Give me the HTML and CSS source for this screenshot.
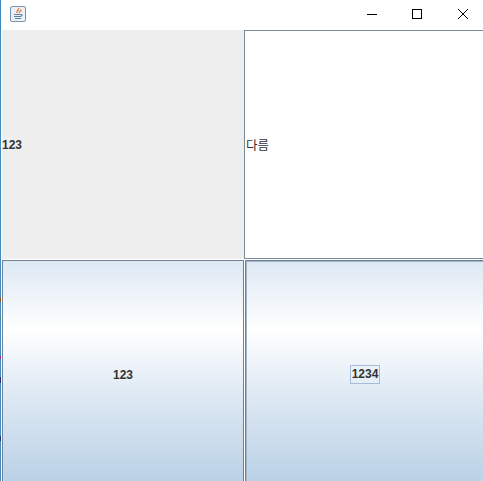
FILE: index.html
```html
<!DOCTYPE html>
<html lang="en">
<head>
    <meta charset="UTF-8">
    <meta name="viewport" content="width=device-width, initial-scale=1.0">
    <title>Swing window</title>
    <link rel="stylesheet" href="styles.css">
</head>
<body>
    <div class="window">
        <div class="titlebar">
            <svg class="app-icon" width="16" height="16" viewBox="0 0 16 16">
                <rect x="0.5" y="0.5" width="15" height="15" rx="1.5" fill="#e9f0f7" stroke="#7d93ab"/>
                <path d="M8.5 2c1.5 1.5-2.5 2.5-1.5 5M11 3.500c.5 1.500-2.500 2-1.500 3.500" fill="none" stroke="#e8742a" stroke-width="1.3"/>
                <path d="M4 8.5h6.500M4 10.5h7M5 12.5h6" stroke="#5b7f9f" stroke-width="1"/>
                <path d="M10.5 8.5h1.500v1.500h-1.500" fill="none" stroke="#5b7f9f"/>
            </svg>
            <div class="window-controls">
                <svg width="46" height="29" viewBox="0 0 46 29"><path d="M19 14.5h10" stroke="#000"/></svg>
                <svg width="46" height="29" viewBox="0 0 46 29"><rect x="18.5" y="9.5" width="9" height="9" fill="none" stroke="#000"/></svg>
                <svg width="46" height="29" viewBox="0 0 46 29"><path d="M18 9l10 10M28 9l-10 10" stroke="#000" fill="none"/></svg>
            </div>
        </div>
        <div class="content">
            <div class="label label-plain"><span class="bold">123</span></div>
            <div class="label label-field">다름</div>
            <button class="btn">123</button>
            <button class="btn btn-default"><span class="focus">1234</span></button>
        </div>
    </div>
</body>
</html>
```

FILE: styles.css
```css
html, body {
    margin: 0;
    height: 100%;
    overflow: hidden;
}
body {
    background: #ffffff;
    font-family: "Liberation Sans", Arial, sans-serif;
    font-size: 12px;
    color: #333333;
}
/* 1px strip of desktop showing along the left edge */
.window {
    height: 481px;
    padding-left: 1px;
    box-sizing: border-box;
    display: flex;
    flex-direction: column;
    background: linear-gradient(
        #3f8cc4 297px, #8a5a20 297px, #8a5a20 302px,
        #3f8cc4 302px, #3f8cc4 316px, #3f8f80 316px, #3f8f80 320px,
        #3f8cc4 320px, #3f8cc4 356px, #a0209a 356px, #a0209a 359px,
        #3f8cc4 359px, #3f8cc4 377px, #20306a 377px, #20306a 383px,
        #3f8cc4 383px, #3f8cc4 436px, #20306a 436px, #20306a 441px,
        #3f8cc4 441px
    ) left top / 1px 100% no-repeat;
    background-color: #ffffff;
}
.titlebar {
    height: 30px;
    flex: none;
    display: flex;
    justify-content: space-between;
    padding-left: 9px;
    background: #ffffff;
}
.app-icon {
    margin-top: 6px;
}
.window-controls {
    display: flex;
    margin-right: -3px;
}
/* the frame runs a little past the right and bottom of the shot */
.content {
    flex: 1;
    min-height: 0;
    display: grid;
    grid-template-columns: 242px 241px;
    grid-template-rows: 229px 229px;
    row-gap: 1px;
    padding-left: 1px;
    background: #ffffff;
}
.label {
    display: flex;
    align-items: center;
}
.label-plain {
    background: #eeeeee;
}
.bold {
    font-weight: bold;
}
.label-field {
    padding-left: 1px;
    background: #ffffff;
    border: 1px solid #7a8a99;
    font-family: "Noto Sans CJK KR", sans-serif;
    font-size: 12.5px;
}
.btn {
    margin: 0;
    padding: 0;
    border: 1px solid #6f8299;
    background: linear-gradient(#dde8f3 0%, #ffffff 30%, #dde8f3 60%, #b8cfe5 100%);
    font-family: "Liberation Sans", Arial, sans-serif;
    font-size: 12px;
    font-weight: bold;
    color: #333333;
}
.btn-default {
    margin-left: 1px;
    box-shadow: inset 0 0 0 1px #a3b5c9;
}
.focus {
    display: inline-block;
    padding: 1px 0;
    line-height: 15px;
    width: 28px;
    border: 1px solid #a3bddb;
}
```
